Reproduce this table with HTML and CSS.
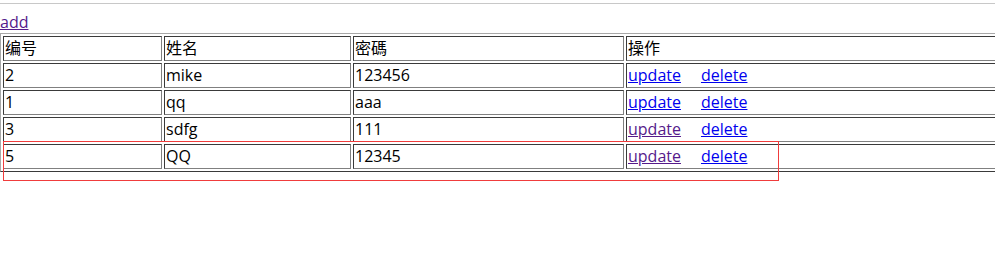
FILE: index.html
```html
<!DOCTYPE html>
<html lang="zh">
<head>
<meta charset="utf-8">
<title>用户列表</title>
<link rel="stylesheet" href="styles.css">
</head>
<body>
<div class="page">
  <div class="topline"></div>
  <div class="addbar"><a class="visited" href="#add">add</a></div>
  <table class="users">
    <tr>
      <td class="c1">编号</td>
      <td class="c2">姓名</td>
      <td class="c3">密碼</td>
      <td class="c4">操作</td>
    </tr>
    <tr>
      <td>2</td><td>mike</td><td>123456</td>
      <td><a href="#u2">update</a><a class="del" href="#d2">delete</a></td>
    </tr>
    <tr>
      <td>1</td><td>qq</td><td>aaa</td>
      <td><a href="#u1">update</a><a class="del" href="#d1">delete</a></td>
    </tr>
    <tr>
      <td>3</td><td>sdfg</td><td>111</td>
      <td><a class="visited" href="#u3">update</a><a class="del" href="#d3">delete</a></td>
    </tr>
    <tr>
      <td>5</td><td>QQ</td><td>12345</td>
      <td><a class="visited" href="#u5">update</a><a class="del" href="#d5">delete</a></td>
    </tr>
  </table>
  <div class="highlight"></div>
</div>
</body>
</html>
```
FILE: styles.css
```css
html, body {
  margin: 0;
  padding: 0;
  background: #ffffff;
}
body {
  font-family: "Open Sans", "Noto Sans CJK SC", sans-serif;
  font-size: 16px;
  line-height: 21px;
  color: #000000;
  overflow: hidden;
}
.page {
  position: relative;
  box-sizing: border-box;
  width: 995px;
  height: 255px;
  padding-top: 3px;
}
.topline {
  height: 0;
  border-top: 1px solid #c8c8c8;
}
.addbar {
  padding-top: 8px;
  height: 21px;
  line-height: 21px;
}
a {
  color: #0000ee;
  text-decoration: underline;
}
a.visited {
  color: #551a8b;
}
a.del {
  margin-left: 20px;
}
.users {
  width: 1030px;
  table-layout: fixed;
  border-collapse: separate;
  border-spacing: 2px;
  border-style: solid;
  border-width: 1px;
  border-color: #a8a8a8 #3a3a3a #3a3a3a #a8a8a8;
}
.users td {
  box-sizing: border-box;
  padding: 1px;
  height: 25px;
  line-height: 21px;
  text-align: left;
  vertical-align: middle;
  white-space: nowrap;
  border-style: solid;
  border-width: 1px;
  border-color: #3a3a3a #808080 #808080 #3a3a3a;
}
.users td.c1 { width: 159px; }
.users td.c2 { width: 187px; }
.users td.c3 { width: 271px; }
.highlight {
  position: absolute;
  left: 3px;
  top: 141px;
  width: 774px;
  height: 38px;
  border: 1px solid #f03c3c;
}
```
